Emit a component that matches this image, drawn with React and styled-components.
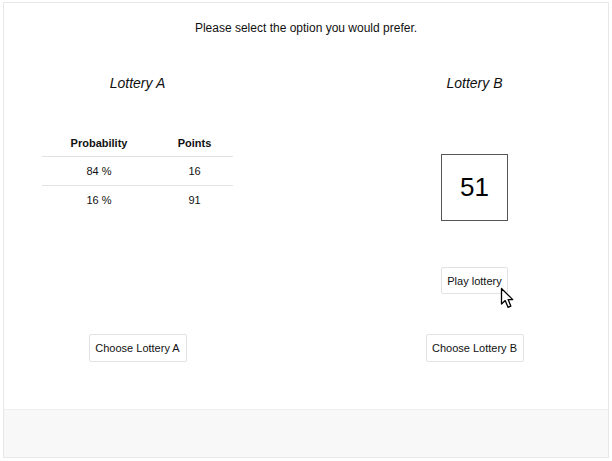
import styled, { createGlobalStyle } from 'styled-components';

const GlobalStyle = createGlobalStyle`
  html, body {
    margin: 0;
    padding: 0;
    background: #fff;
  }
  body {
    font-family: "Liberation Sans", Arial, sans-serif;
    color: #111;
  }
`;

const outcomes = [
  { probability: 84, points: 16 },
  { probability: 16, points: 91 },
];

export default function App() {
  return (
    <>
      <GlobalStyle />
      <Page>
        <Card>
          <Main>
            <Prompt>Please select the option you would prefer.</Prompt>
            <Columns>
              <Column>
                <LotteryTitle>Lottery A</LotteryTitle>
                <ColumnBody>
                  <OutcomeTable>
                    <thead>
                      <tr>
                        <HeadCell $width={114}>Probability</HeadCell>
                        <HeadCell $width={77}>Points</HeadCell>
                      </tr>
                    </thead>
                    <tbody>
                      {outcomes.map((o) => (
                        <Row key={o.probability}>
                          <Cell>{o.probability} %</Cell>
                          <Cell>{o.points}</Cell>
                        </Row>
                      ))}
                    </tbody>
                  </OutcomeTable>
                </ColumnBody>
                <ChooseButton>Choose Lottery A</ChooseButton>
              </Column>

              <Column>
                <LotteryTitle>Lottery B</LotteryTitle>
                <ColumnBody>
                  <ResultBox>51</ResultBox>
                  <PlayWrap>
                    <PlayButton>Play lottery</PlayButton>
                    <Pointer width="14" height="22" viewBox="0 0 14 22">
                      <path
                        d="M1.5 1.5 L1.5 17 L5.2 13.6 L8 20.3 L10.8 19.1 L8.1 12.6 L12.8 12.6 Z"
                        fill="#fff"
                        stroke="#000"
                        strokeWidth="1.3"
                        strokeLinejoin="round"
                      />
                    </Pointer>
                  </PlayWrap>
                </ColumnBody>
                <ChooseButton>Choose Lottery B</ChooseButton>
              </Column>
            </Columns>
          </Main>
          <Footer />
        </Card>
      </Page>
    </>
  );
}

// Styled Components

const Page = styled.div`
  padding: 2px 3px 3px 3px;
`;

const Card = styled.div`
  box-sizing: border-box;
  width: 606px;
  height: 456px;
  border: 1px solid #e8e8e8;
  display: flex;
  flex-direction: column;
`;

const Main = styled.div`
  flex: 1;
  display: flex;
  flex-direction: column;
`;

const Prompt = styled.div`
  margin-top: 17px;
  text-align: center;
  font-size: 12px;
  line-height: 16px;
  color: #111;
`;

const Columns = styled.div`
  display: flex;
  justify-content: space-between;
  margin-top: 38px;
`;

const Column = styled.div`
  width: 267px;
  display: flex;
  flex-direction: column;
  align-items: center;
`;

const LotteryTitle = styled.div`
  font-size: 14px;
  line-height: 18px;
  font-style: italic;
  color: #111;
`;

const ColumnBody = styled.div`
  height: 242px;
  display: flex;
  flex-direction: column;
  align-items: center;
`;

const OutcomeTable = styled.table`
  margin-top: 37px;
  width: 191px;
  border-collapse: collapse;
  font-size: 11px;
`;

const HeadCell = styled.th`
  width: ${(p) => p.$width}px;
  height: 27px;
  padding: 0;
  font-weight: bold;
  text-align: center;
  border-bottom: 1px solid #e2e2e2;
`;

const Row = styled.tr`
  &:not(:last-child) td {
    border-bottom: 1px solid #e2e2e2;
  }
`;

const Cell = styled.td`
  height: 28px;
  padding: 0;
  text-align: center;
`;

const ResultBox = styled.div`
  margin-top: 62px;
  box-sizing: border-box;
  width: 67px;
  height: 67px;
  border: 1px solid #555;
  display: flex;
  align-items: center;
  justify-content: center;
  font-size: 26px;
  color: #000;
`;

const PlayWrap = styled.div`
  position: relative;
  margin-top: 46px;
`;

const BaseButton = styled.button`
  box-sizing: border-box;
  background: #fff;
  border: 1px solid #e2e2e2;
  border-radius: 2px;
  font-family: "Liberation Sans", Arial, sans-serif;
  font-size: 11px;
  color: #111;
  padding: 0;
  cursor: pointer;
`;

const PlayButton = styled(BaseButton)`
  width: 67px;
  height: 27px;
`;

const ChooseButton = styled(BaseButton)`
  width: 98px;
  height: 28px;
`;

const Pointer = styled.svg`
  position: absolute;
  left: 59px;
  top: 20px;
`;

const Footer = styled.div`
  height: 47px;
  border-top: 1px solid #eeeeee;
  background: #f8f8f8;
`;
